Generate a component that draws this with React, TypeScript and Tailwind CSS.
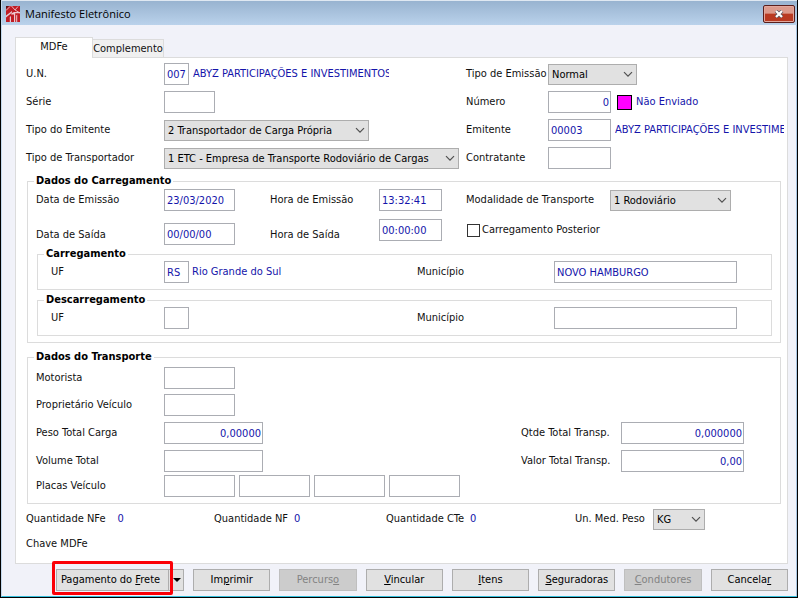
import { useState } from 'react'
import type { ReactNode } from 'react'
import clsx from 'clsx'

const inputBase = 'h-[22px] border border-[#abadb3] bg-white text-[#1414aa] outline-none focus:border-[#3c7fb1]'
const fieldsetBase = 'min-w-0 border border-[#dcdcdc]'
const legendBase = 'h-[14px] px-0.5 font-bold text-black'

type FieldProps = {
  id: string
  value?: string
  className: string
  label?: string
  right?: boolean
}

function Field({ id, value = '', className, label, right }: FieldProps) {
  const [text, setText] = useState(value)
  return (
    <input
      id={id}
      type="text"
      aria-label={label}
      value={text}
      onChange={e => setText(e.target.value)}
      className={clsx(inputBase, right ? 'pr-px pl-0.5 text-right' : 'px-0.5', className)}
    />
  )
}

function Picker({ id, option, className }: { id: string; option: string; className: string }) {
  return (
    <div className={clsx('relative h-[21px]', className)}>
      <select id={id} className="h-full w-full appearance-none border border-[#adadad] bg-[#e1e1e1] pt-px pr-5 pl-[3px] text-black outline-none">
        <option>{option}</option>
      </select>
      <svg className="pointer-events-none absolute top-[7px] right-1 h-[7px] w-[10px]" viewBox="0 0 10 7" fill="none" stroke="#505050" strokeWidth="1.2">
        <path d="M1 1.2 5 5.2 9 1.2" />
      </svg>
    </div>
  )
}

function ActionButton({ children, disabled }: { children: ReactNode; disabled?: boolean }) {
  return (
    <button
      type="button"
      disabled={disabled}
      className="h-[22px] min-w-0 flex-1 border border-[#adadad] bg-[#e1e1e1] text-center text-black hover:border-[#0078d7] disabled:border-[#bfbfbf] disabled:bg-[#cccccc] disabled:text-[#838383]"
    >
      {children}
    </button>
  )
}

function Logo() {
  return (
    <svg className="h-4 w-[14px]" viewBox="0 0 14 16">
      <path d="M0 0h14v16H0z" fill="#c01c24" />
      <path d="M0 4.5 4 .5M5.5 0 9 4M9 4l3-3.5M9 4l5 3" fill="none" stroke="#e6b3bb" strokeWidth="1" />
      <path d="M0 9.5 6 5v1.5L0 11.5zM3.8 16v-5L5 10v6z" fill="#e3cbd4" />
      <path d="M5.2 7.6 8 6h6v1.3H9.2V16H8V8.4H5.2zM10.2 9.6l1-1V16h-1z" fill="#eec9cf" />
      <path d="M0 0h3L0 3z" fill="#5c1216" />
    </svg>
  )
}

function TitleBar() {
  return (
    <header className="flex h-[25px] items-center border-t border-[#dfe8f2] bg-linear-to-b from-[#98b3d0] to-[#bad2eb] pt-0.5 pr-0.5 pl-1">
      <Logo />
      <h1 className="ml-[5px] flex-1 font-['Open_Sans','Noto_Sans',sans-serif] text-[11px] leading-4 text-black">Manifesto Eletrônico</h1>
      <button
        type="button"
        aria-label="Fechar"
        className="flex h-[18px] w-8 items-center justify-center rounded-[2px] border border-[#5a1f1c] bg-linear-to-b from-[#dc9a8c] from-45% to-[#b93a22] to-50% shadow-[inset_0_0_0_1px_#e3a79c]"
      >
        <svg className="h-2 w-[10px]" viewBox="0 0 10 8" fill="none">
          <path d="m2 1 6 6M8 1 2 7" stroke="#5b5560" strokeWidth="3.6" />
          <path d="m2 1 6 6M8 1 2 7" stroke="#fff" strokeWidth="2.2" />
        </svg>
      </button>
    </header>
  )
}

function Identification() {
  return (
    <div className="grid auto-rows-[28px] grid-cols-[138px_302px_82px_1fr] items-center pl-2.5">
      <label htmlFor="un">U.N.</label>
      <div className="flex items-center gap-1">
        <Field id="un" value="007" className="w-[25px]" />
        <span className="w-[196px] overflow-hidden whitespace-nowrap text-[#1414aa]">ABYZ PARTICIPAÇÕES E INVESTIMENTOS</span>
      </div>
      <label htmlFor="tipo-emissao">Tipo de Emissão</label>
      <Picker id="tipo-emissao" option="Normal" className="w-[89px]" />

      <label htmlFor="serie">Série</label>
      <Field id="serie" className="w-[51px]" />
      <label htmlFor="numero">Número</label>
      <div className="flex items-center">
        <Field id="numero" value="0" className="w-[63px]" right />
        <span className="ml-1.5 size-[15px] border border-black bg-[#ff00ff]" />
        <span className="ml-1 text-[#1414aa]">Não Enviado</span>
      </div>

      <label htmlFor="tipo-emitente">Tipo do Emitente</label>
      <Picker id="tipo-emitente" option="2 Transportador de Carga Própria" className="w-[205px]" />
      <label htmlFor="emitente">Emitente</label>
      <div className="flex min-w-0 items-center gap-1">
        <Field id="emitente" value="00003" className="w-[63px] shrink-0" />
        <span className="mr-[3px] min-w-0 flex-1 overflow-hidden whitespace-nowrap text-[#1414aa]">ABYZ PARTICIPAÇÕES E INVESTIMENTOS</span>
      </div>

      <label htmlFor="tipo-transportador">Tipo de Transportador</label>
      <Picker id="tipo-transportador" option="1 ETC - Empresa de Transporte Rodoviário de Cargas" className="w-[295px]" />
      <label htmlFor="contratante">Contratante</label>
      <Field id="contratante" className="w-[63px]" />
    </div>
  )
}

type PlaceProps = { title: string; prefix: string; uf?: string; estado?: string; municipio?: string }

function Place({ title, prefix, uf, estado, municipio }: PlaceProps) {
  return (
    <fieldset className={clsx(fieldsetBase, 'pb-1.5')}>
      <legend className={clsx(legendBase, 'ml-1.5')}>{title}</legend>
      <div className="grid h-[22px] grid-cols-[113px_253px_137px_1fr] items-center pl-[13px]">
        <label htmlFor={`${prefix}-uf`}>UF</label>
        <div className="flex items-center gap-[3px]">
          <Field id={`${prefix}-uf`} value={uf} className="w-[25px]" />
          <span className="text-[#1414aa]">{estado}</span>
        </div>
        <label htmlFor={`${prefix}-municipio`}>Município</label>
        <Field id={`${prefix}-municipio`} value={municipio} className="w-[183px]" />
      </div>
    </fieldset>
  )
}

function Loading() {
  return (
    <fieldset className={clsx(fieldsetBase, 'mt-0.5 mr-1.5 ml-[11px] pb-1.5')}>
      <legend className={clsx(legendBase, 'ml-1.5')}>Dados do Carregamento</legend>
      <div className="grid h-6 grid-cols-[128px_106px_109px_87px_144px_1fr] items-center pl-2">
        <label htmlFor="data-emissao">Data de Emissão</label>
        <Field id="data-emissao" value="23/03/2020" className="w-[71px]" />
        <label htmlFor="hora-emissao">Hora de Emissão</label>
        <Field id="hora-emissao" value="13:32:41" className="w-[63px]" />
        <label htmlFor="modalidade">Modalidade de Transporte</label>
        <Picker id="modalidade" option="1 Rodoviário" className="w-[121px]" />
      </div>
      <div className="mt-[7px] grid h-[26px] grid-cols-[128px_106px_109px_87px_1fr] items-end pl-2">
        <label htmlFor="data-saida" className="mb-[3px]">Data de Saída</label>
        <Field id="data-saida" value="00/00/00" className="w-[71px]" />
        <label htmlFor="hora-saida" className="mb-[3px]">Hora de Saída</label>
        <Field id="hora-saida" value="00:00:00" className="w-[63px] self-start" />
        <label className="flex h-[22px] items-center gap-0.5 self-start pl-px">
          <input type="checkbox" className="size-[13px] appearance-none border border-[#333] bg-white checked:bg-[#333]" />
          Carregamento Posterior
        </label>
      </div>
      <div className="mt-0.5 mr-2 ml-[9px] flex flex-col gap-[3px]">
        <Place title="Carregamento" prefix="carga" uf="RS" estado="Rio Grande do Sul" municipio="NOVO HAMBURGO" />
        <Place title="Descarregamento" prefix="descarga" />
      </div>
    </fieldset>
  )
}

function Transport() {
  return (
    <fieldset className={clsx(fieldsetBase, 'mt-[7px] mr-1.5 ml-[11px] pb-1.5')}>
      <legend className={clsx(legendBase, 'ml-1.5')}>Dados do Transporte</legend>
      <div className="grid grid-cols-[128px_357px_100px_1fr] grid-rows-[27px_28px_28px_28px_22px] items-center pl-2">
        <label htmlFor="motorista">Motorista</label>
        <Field id="motorista" className="col-span-3 w-[71px]" />
        <label htmlFor="proprietario">Proprietário Veículo</label>
        <Field id="proprietario" className="col-span-3 w-[71px]" />
        <label htmlFor="peso">Peso Total Carga</label>
        <Field id="peso" value="0,00000" className="w-[99px]" right />
        <label htmlFor="qtde">Qtde Total Transp.</label>
        <Field id="qtde" value="0,000000" className="w-[123px]" right />
        <label htmlFor="volume">Volume Total</label>
        <Field id="volume" className="w-[99px]" />
        <label htmlFor="valor">Valor Total Transp.</label>
        <Field id="valor" value="0,00" className="w-[123px]" right />
        <label htmlFor="placa-1">Placas Veículo</label>
        <div className="col-span-3 flex gap-1">
          {[1, 2, 3, 4].map(n => (
            <Field key={n} id={`placa-${n}`} label={n > 1 ? `Placa ${n}` : undefined} className="w-[71px]" />
          ))}
        </div>
      </div>
    </fieldset>
  )
}

function Count({ label, className }: { label: string; className: string }) {
  return (
    <span className={clsx('flex', className)}>
      {label}
      <output className="text-[#1414aa]">0</output>
    </span>
  )
}

export default function App() {
  return (
    <div className="border-x border-b border-black bg-[#a9c6e2] font-['DejaVu_Sans_Condensed','DejaVu_Sans',sans-serif] text-[11px] leading-[14px] text-[#111]">
      <div className="border-b border-l border-b-[#35bfdc] border-l-[#c4d9ee]">
        <TitleBar />
        <main className="mr-px bg-[#f1f2f9] pt-3 pr-2 pb-[5px] pl-[13px]">
          <div role="tablist" className="flex items-end">
            <button type="button" role="tab" aria-selected="true" className="-mb-px h-[21px] w-[78px] border border-b-0 border-[#dcdcdc] bg-white pb-0.5">
              MDFe
            </button>
            <button type="button" role="tab" aria-selected="false" className="h-[18px] w-[71px] border border-b-0 border-l-0 border-[#dcdcdc] bg-[#f0f0f0] whitespace-nowrap">
              Complemento
            </button>
          </div>
          <section className="border border-[#dcdcdc] bg-white pt-0.5">
            <Identification />
            <Loading />
            <Transport />
            <div className="grid h-[30px] grid-cols-[188px_172px_189px_78px_1fr] items-center pl-2.5">
              <Count label="Quantidade NFe" className="gap-3" />
              <Count label="Quantidade NF" className="gap-1.5" />
              <Count label="Quantidade CTe" className="gap-1.5" />
              <label htmlFor="unidade">Un. Med. Peso</label>
              <Picker id="unidade" option="KG" className="w-[52px]" />
            </div>
            <div className="h-[29px] pt-[3px] pl-2.5">Chave MDFe</div>
          </section>
          <footer className="mt-[5px] flex gap-[9px] pl-[41px]">
            <div className="relative flex w-32">
              <button type="button" className="h-[22px] w-[113px] border border-[#adadad] bg-[#e1e1e1] pr-1 text-black">
                Pagamento do <u>F</u>rete
              </button>
              <button type="button" aria-label="Mais opções" className="flex h-[22px] flex-1 items-center justify-end border border-l-0 border-[#adadad] bg-[#e1e1e1] pr-0.5">
                <svg className="h-1 w-2" viewBox="0 0 8 4"><path d="M0 0h8L4 4z" fill="#000" /></svg>
              </button>
              <span className="pointer-events-none absolute -top-2 right-[11px] -bottom-1 -left-1 rounded-[2px] border-3 border-[#fb0007]" />
            </div>
            <ActionButton>Im<u>p</u>rimir</ActionButton>
            <ActionButton disabled>Percurs<u>o</u></ActionButton>
            <ActionButton><u>V</u>incular</ActionButton>
            <ActionButton><u>I</u>tens</ActionButton>
            <ActionButton><u>S</u>eguradoras</ActionButton>
            <ActionButton disabled><u>C</u>ondutores</ActionButton>
            <ActionButton>Cancela<u>r</u></ActionButton>
          </footer>
        </main>
      </div>
    </div>
  )
}
